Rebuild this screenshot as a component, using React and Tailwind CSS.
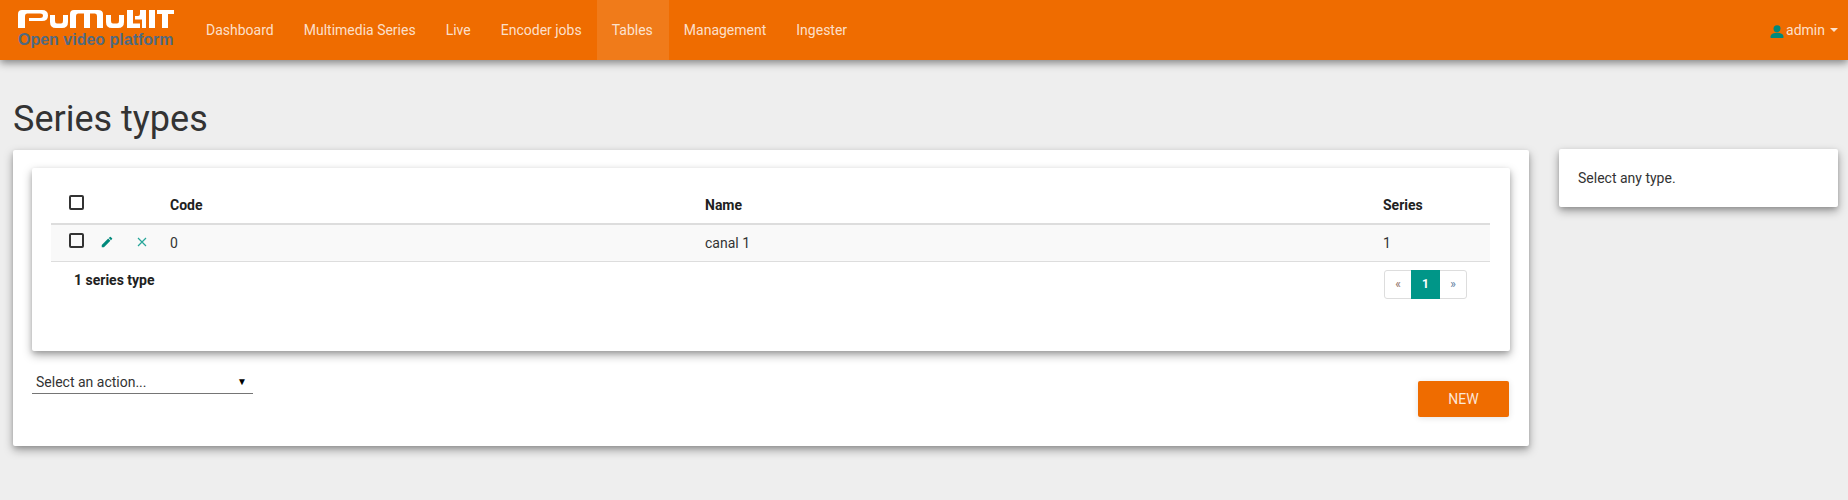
import React from "react";

function Logo() {
  return (
    <svg width="156" height="18" viewBox="0 0 156 18" className="block">
      <g fill="#fff">
        {/* P */}
        <path d="M0 18V4Q0 0 4 0H24Q30 0 30 5.500Q30 11 24 11H11V8H22Q25 8 25 5.500Q25 3.500 22 3.500H9Q7 3.500 7 6V18Z" />
        {/* u */}
        <path d="M32 5H37V11Q37 13.500 39 13.500H43Q45 13.500 45 11V5H50V12Q50 18 44 18H38Q32 18 32 12Z" />
        {/* M */}
        <path d="M52 18V4Q52 0 56 0H80Q85 0 85 4V18H79V6Q79 3.500 77 3.500H72V18H66V3.500H60Q58 3.500 58 6V18Z" />
        {/* u */}
        <path d="M88 5H93V11Q93 13.500 95 13.500H99Q101 13.500 101 11V5H106V12Q106 18 100 18H94Q88 18 88 12Z" />
        {/* K */}
        <path d="M109 0H115V13.500H122V18H109Z" />
        <path d="M122 0H128V18H124V9.500H117V6H120Q122 6 122 4Z" />
        {/* I */}
        <path d="M131 0H137V18H131Z" />
        {/* T */}
        <path d="M139 0H156V4H150V18H144V4H139Z" />
      </g>
    </svg>
  );
}

function Check() {
  return <span className="block w-[15px] h-[15px] border-2 border-[#333] rounded-[2px]" />;
}

const navItems = ["Dashboard", "Multimedia Series", "Live", "Encoder jobs", "Tables", "Management", "Ingester"];

const cardShadow = "shadow-[0_4px_10px_0_rgba(0,0,0,0.35),0_2px_4px_0_rgba(0,0,0,0.12)]";

export default function App() {
  return (
    <div className="min-h-[500px] bg-[#eeeeee] text-[14px] text-[#333] font-['Roboto',sans-serif] leading-[20px]">
      <nav className="h-[60px] bg-[#ef6c00] flex items-stretch shadow-[0_3px_8px_rgba(0,0,0,0.45)] relative">
        <div className="pl-[18px] w-[191px] shrink-0 pt-[10px]">
          <Logo />
          <div className="mt-[3px] font-['Liberation_Sans',sans-serif] font-bold text-[16px] leading-[18px] text-[#4f6a80] whitespace-nowrap">
            Open video platform
          </div>
        </div>
        <div className="flex">
          {navItems.map((n) => (
            <a key={n} className={`pl-[15px] flex items-center text-[rgba(255,255,255,0.8)] ${n === "Tables" ? "pr-[16px] bg-[rgba(255,255,255,0.1)]" : "pr-[15px]"}`}>
              {n}
            </a>
          ))}
        </div>
        <div className="ml-auto pr-[10px] flex items-center text-[rgba(255,255,255,0.8)]">
          <svg width="14" height="14" viewBox="0 0 24 24" fill="#00897b" className="mr-[2px] mt-[1px]">
            <circle cx="12" cy="8" r="6" />
            <path d="M1 24v-3c0-4 7-6 11-6s11 2 11 6v3z" />
          </svg>
          <span>admin</span>
          <span className="ml-[5px] w-0 h-0 border-x-[4px] border-x-transparent border-t-[4px] border-t-[rgba(255,255,255,0.8)]" />
        </div>
      </nav>

      <main className="pl-[13px] pr-[10px]">
        <h1 className="text-[36px] leading-[40px] font-normal text-[#333] mt-[39px] mb-[11px] font-['Roboto',sans-serif]">Series types</h1>
        <div className="flex items-start">
          <section className={`w-[1516px] h-[296px] bg-white rounded-[2px] ${cardShadow} px-[19px] pt-[18px]`}>
            <div className={`h-[183px] bg-white rounded-[2px] ${cardShadow} pl-[19px] pr-[20px] pt-[14px]`}>
              <div className="grid grid-cols-[119px_535px_678px_1fr] h-[43px] border-b-2 border-[#ddd] font-bold text-[#212121]">
                <div className="pl-[18px] pt-[13px]"><Check /></div>
                <div className="pt-[13px]">Code</div>
                <div className="pt-[13px]">Name</div>
                <div className="pt-[13px]">Series</div>
              </div>
              <div className="grid grid-cols-[119px_535px_678px_1fr] h-[37px] bg-[#f9f9f9] border-b border-[#ddd] items-center">
                <div className="pl-[18px] flex items-center h-full pb-[5px]">
                  <Check />
                  <svg width="14" height="14" viewBox="0 0 24 24" fill="#00897b" className="ml-[16px] mt-[2px]">
                    <path d="M3 17.250V21h3.750L17.810 9.940l-3.750-3.750L3 17.250zM20.710 7.040a1 1 0 0 0 0-1.410l-2.340-2.340a1 1 0 0 0-1.410 0l-1.830 1.830 3.750 3.750 1.830-1.830z" />
                  </svg>
                  <svg width="12" height="12" viewBox="0 0 12 12" fill="none" stroke="#26a69a" strokeWidth="1.200" className="ml-[22px] mt-[3px]">
                    <path d="M2 2l8 8M10 2l-8 8" />
                  </svg>
                </div>
                <div>0</div>
                <div>canal 1</div>
                <div>1</div>
              </div>
              <div className="grid grid-cols-[1333px_1fr]">
                <div className="pl-[23px] pt-[8px] font-bold text-[#212121]">1 series type</div>
                <div className="pt-[8px]">
                  <div className="flex w-[83px] h-[29px] border border-[#ddd] rounded-[3px] text-[12px] leading-[27px] text-center">
                    <span className="w-[26px] text-[#8d6e63]">«</span>
                    <span className="w-[29px] -my-[1px] leading-[29px] bg-[#009688] text-white font-bold">1</span>
                    <span className="flex-1 text-[#5c7c9c]">»</span>
                  </div>
                </div>
              </div>
            </div>
            <div className="flex justify-between items-start">
              <div className="w-[221px] h-[24px] mt-[19px] border-b border-[#757575] flex items-center justify-between pl-[4px] pr-[6px] text-[#333]">
                <span>Select an action...</span>
                <span className="text-[10px] text-black leading-none">▼</span>
              </div>
              <button className="mt-[30px] mr-[1px] w-[91px] h-[36px] bg-[#ef6c00] text-[rgba(255,255,255,0.85)] rounded-[2px] text-[14px] shadow-[0_1px_6px_rgba(0,0,0,0.12)]">
                NEW
              </button>
            </div>
          </section>
          <aside className={`ml-[30px] w-[279px] h-[58px] -mt-[1px] bg-white rounded-[2px] ${cardShadow} pl-[19px] flex items-center`}>
            Select any type.
          </aside>
        </div>
      </main>
    </div>
  );
}
